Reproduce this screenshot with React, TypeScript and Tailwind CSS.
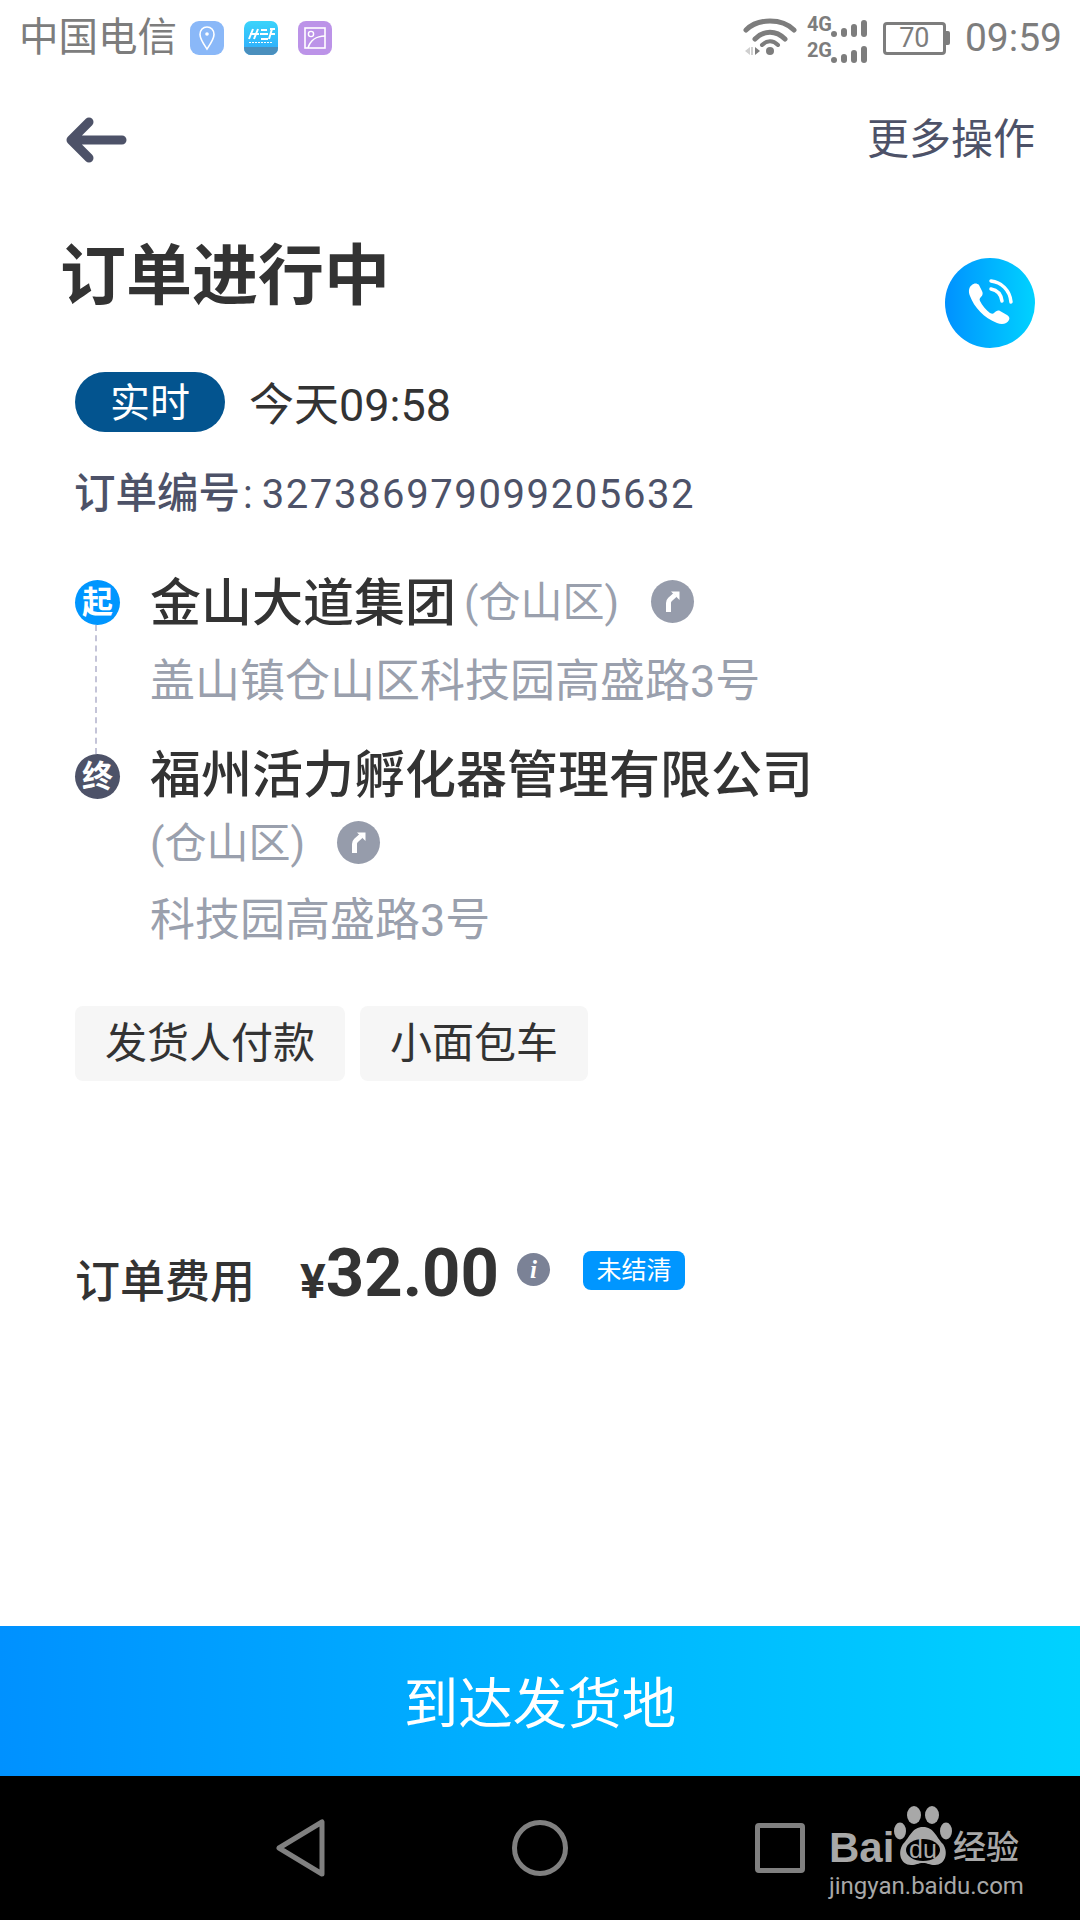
import React from 'react';

const font = { fontFamily: '"Roboto", "Noto Sans CJK SC", sans-serif' };

const TurnIcon = () => (
  <span className="w-[43px] h-[43px] rounded-full bg-[#969cab] flex items-center justify-center shrink-0">
    <svg width="14" height="21" viewBox="0 0 14 21" fill="none">
      <path d="M2.5 21V12C2.5 10.5 3 9.5 4 8.5L9 4" stroke="#fff" strokeWidth="5" />
      <path d="M5 0.5H13.5V9Z" fill="#fff" />
    </svg>
  </span>
);

const StatusBar = () => (
  <div className="h-[76px] flex items-center pl-[19px] pr-[18px] text-[#7d7d7d]">
    <span className="text-[39.5px] leading-none">中国电信</span>
    <div className="ml-[13px] flex gap-[20px]">
      <span className="w-[34px] h-[34px] rounded-[9px] bg-[#8ab8f8] flex items-center justify-center">
        <svg width="18" height="26" viewBox="0 0 18 26" fill="none">
          <path d="M9 24C5 18 2 14 2 9.5C2 5 5 2 9 2s7 3 7 7.5C16 14 13 18 9 24Z" stroke="#fff" strokeWidth="1.6" />
          <circle cx="9" cy="9" r="1.8" fill="#fff" />
        </svg>
      </span>
      <span className="w-[34px] h-[34px] rounded-[7px] overflow-hidden bg-gradient-to-b from-[#3bd4fb] to-[#2fa8fb] flex flex-col items-center justify-between">
        <svg width="30" height="19" viewBox="0 0 30 19" className="mt-[6px]" fill="none">
          <path d="M3 12L7 2M8 12L12 2M4 7H13M15 3H21M14 7H22M15 12H22M24 2H29M24 7H29M23 12L26 2" stroke="#fff" strokeWidth="2" />
          <path d="M3 15.5H27" stroke="#fff" strokeWidth="1" strokeDasharray="2 1" />
        </svg>
        <span className="w-full h-[8px] bg-[#4a8fbd]" />
      </span>
      <span className="w-[34px] h-[34px] rounded-[8px] bg-[#bc93e8] flex items-center justify-center">
        <svg width="24" height="24" viewBox="0 0 24 24" fill="none">
          <rect x="2" y="2" width="20" height="20" stroke="#fff" strokeWidth="1.6" />
          <circle cx="8" cy="8" r="2.6" stroke="#fff" strokeWidth="1.4" />
          <path d="M5 22C7 15 13 10 22 10" stroke="#fff" strokeWidth="1.6" />
        </svg>
      </span>
    </div>
    <div className="ml-auto flex items-center">
      <svg width="54" height="42" viewBox="0 0 54 42" fill="none" className="-mt-[3px]">
        <path d="M3 14C15 2 39 2 51 14" stroke="#7d7d7d" strokeWidth="5" strokeLinecap="round" />
        <path d="M12 23C21 14 33 14 42 23" stroke="#7d7d7d" strokeWidth="5" strokeLinecap="round" />
        <path d="M19 29C24 24 30 24 35 29" stroke="#7d7d7d" strokeWidth="4" strokeLinecap="round" />
        <circle cx="27" cy="35" r="4" fill="#7d7d7d" />
        <path d="M2 35L7 31V39Z" fill="#cfcfcf" />
        <path d="M9 31V39" stroke="#cfcfcf" strokeWidth="2" />
        <path d="M12 31L17 35L12 39Z" fill="#7d7d7d" />
      </svg>
      <div className="ml-[10px] flex flex-col gap-[3px]">
        {['4G', '2G'].map((label) => (
          <div key={label} className="flex items-end h-[23px]">
            <span className="text-[20px] leading-none font-bold self-start w-[24px]">{label}</span>
            <div className="flex items-end gap-[4px]">
              <span className="w-[6px] h-[6px] rounded-full bg-[#7d7d7d]" />
              <span className="w-[6px] h-[9px] rounded-full bg-[#7d7d7d]" />
              <span className="w-[6px] h-[13px] rounded-full bg-[#7d7d7d]" />
              <span className="w-[6px] h-[17px] rounded-full bg-[#7d7d7d]" />
            </div>
          </div>
        ))}
      </div>
      <div className="ml-[16px] flex items-center">
        <span className="w-[63px] h-[33px] border-[3px] border-[#7d7d7d] rounded-[4px] flex items-center justify-center text-[27px] leading-none">70</span>
        <span className="w-[4px] h-[14px] bg-[#7d7d7d] rounded-r-[2px]" />
      </div>
      <span className="ml-[15px] text-[39px] leading-none">09:59</span>
    </div>
  </div>
);

const Tag = ({ children }: { children: React.ReactNode }) => (
  <span className="h-[75px] px-[30px] rounded-[8px] bg-[#f6f6f6] flex items-center text-[42px] text-[#333] leading-none">
    {children}
  </span>
);

const NavBar = () => (
  <div className="h-[144px] bg-black relative flex items-center">
    <div className="ml-[276px] flex items-center">
      <svg width="50" height="58" viewBox="0 0 50 58" fill="none">
        <path d="M3 29L46 3V55Z" stroke="#808080" strokeWidth="5" strokeLinejoin="round" />
      </svg>
      <svg width="56" height="56" viewBox="0 0 56 56" fill="none" className="ml-[186px]">
        <circle cx="28" cy="28" r="25.5" stroke="#808080" strokeWidth="5" />
      </svg>
      <span className="ml-[187px] w-[50px] h-[50px] border-[5px] border-[#808080] rounded-[4px]" />
    </div>
    <div className="absolute left-[829px] top-[30px] w-[192px] text-[#a8a8a8]">
      <div className="flex items-end h-[60px]">
        <span className="text-[42px] leading-[36px] font-bold w-[65px]" style={{ fontFamily: '"Liberation Sans", sans-serif' }}>Bai</span>
        <svg width="58" height="60" viewBox="0 0 58 60" fill="#a8a8a8">
          <ellipse cx="20" cy="9" rx="7" ry="9" />
          <ellipse cx="38" cy="9" rx="7" ry="9" />
          <ellipse cx="6" cy="25" rx="6" ry="8.5" />
          <ellipse cx="52" cy="25" rx="6" ry="8.5" />
          <path d="M29 21C40 21 42 31 49 38C55 47 51 59 41 59C35 59 34 57 29 57C24 57 23 59 17 59C7 59 3 47 9 38C16 31 18 21 29 21Z" />
          <ellipse cx="29" cy="44" rx="17" ry="11" fill="#000" />
          <text x="29" y="52" textAnchor="middle" fontSize="25" fill="#a8a8a8" fontFamily="Liberation Sans">du</text>
        </svg>
        <span className="ml-[1px] text-[33px] leading-[36px] font-medium whitespace-nowrap">经验</span>
      </div>
      <div className="text-[24px] leading-none mt-[8px] whitespace-nowrap" style={{ fontFamily: '"Roboto", sans-serif' }}>jingyan.baidu.com</div>
    </div>
  </div>
);

export default function App() {
  return (
    <div className="w-[1080px] h-[1920px] bg-white flex flex-col overflow-hidden" style={font}>
      <StatusBar />

      <div className="flex items-center justify-between pl-[66px] pr-[45px] h-[128px]">
        <svg width="62" height="46" viewBox="0 0 62 46" fill="none">
          <path d="M23 5L5 23L23 41M6 23H56" stroke="#4d5268" strokeWidth="9" strokeLinecap="round" strokeLinejoin="round" />
        </svg>
        <span className="text-[42px] leading-none text-[#4d5268]">更多操作</span>
      </div>

      <div className="flex items-start justify-between pl-[60px] pr-[45px]">
        <h1 className="text-[66px] leading-none font-bold text-[#333] mt-[40px]">订单进行中</h1>
        <span className="mt-[54px] w-[90px] h-[90px] rounded-full bg-gradient-to-r from-[#0091ff] to-[#00d2ff] flex items-center justify-center">
          <svg width="48" height="50" viewBox="0 0 48 50" fill="none">
            <path d="M6 7C3 9 2 13 4 18C8 29 18 40 31 45C36 47 41 46 43 42C44 40 43 38 41 37L34 33C32 32 30 33 28 35C27 36 26 36 24 35C20 32 16 27 14 23C13 21 14 20 15 19C17 17 17 15 16 13L13 7C11 5 8 5 6 7Z" fill="#fff" />
            <path d="M25 11C31 12 35 16 36 23" stroke="#fff" strokeWidth="3.5" strokeLinecap="round" />
            <path d="M25 3C35 4 44 12 45 24" stroke="#fff" strokeWidth="3.5" strokeLinecap="round" />
          </svg>
        </span>
      </div>

      <div className="pl-[75px] pr-[45px] mt-[24px]">
        <div className="flex items-center">
          <span className="w-[150px] h-[60px] pt-[3px] rounded-full bg-[#03548f] text-white text-[40px] leading-none flex items-center justify-center">实时</span>
          <span className="ml-[24px] pt-[6px] text-[45px] leading-none text-[#333]">今天09:58</span>
        </div>
        <div className="mt-[38px] text-[40px] leading-[48px] text-[#4d5268] -ml-[1px]">
          <span className="text-[41.5px] font-medium">订单编号</span>
          <span className="ml-[3px]">:</span>
          <span className="ml-[9px] tracking-[1.6px]">327386979099205632</span>
        </div>

        <div className="mt-[56px] relative pl-[75px]">
          <span className="absolute left-[20px] top-[50px] h-[129px] border-l-2 border-dashed border-[#c4c4d8]" />
          <span className="absolute left-0 top-[5px] w-[45px] h-[45px] rounded-full bg-[#0096ff] text-white text-[31px] font-bold leading-none flex items-center justify-center">起</span>
          <span className="absolute left-0 top-[179px] w-[45px] h-[45px] rounded-full bg-[#4d5268] text-white text-[31px] font-bold leading-none flex items-center justify-center">终</span>

          <div className="flex items-center h-[56px]">
            <span className="text-[51px] leading-none font-medium text-[#333]">金山大道集团</span>
            <span className="ml-[8px] text-[42px] leading-none text-[#9aa0ad]">(仓山区)</span>
            <span className="ml-[32px] -mt-[4px]"><TurnIcon /></span>
          </div>
          <div className="mt-[23px] text-[45px] leading-[56px] text-[#9aa0ad]">盖山镇仓山区科技园高盛路3号</div>

          <div className="mt-[31px] text-[51px] leading-[70px] font-medium text-[#333]">福州活力孵化器管理有限公司</div>
          <div className="flex items-center h-[56px] mt-[5px]">
            <span className="text-[42px] leading-none text-[#9aa0ad]">(仓山区)</span>
            <span className="ml-[32px] -mt-[4px]"><TurnIcon /></span>
          </div>
          <div className="mt-[21px] text-[45px] leading-[56px] text-[#9aa0ad]">科技园高盛路3号</div>
        </div>

        <div className="mt-[57px] flex gap-[15px]">
          <Tag>发货人付款</Tag>
          <Tag>小面包车</Tag>
        </div>

        <div className="mt-[152px] flex items-center h-[80px]">
          <span className="text-[45px] leading-none font-medium text-[#333] mt-[18px]">订单费用</span>
          <span className="ml-[45px] text-[48px] leading-none font-bold text-[#333] mt-[18px]">¥</span>
          <span className="text-[67px] leading-none font-bold text-[#333]">32.00</span>
          <span className="ml-[18px] w-[33px] h-[33px] rounded-full bg-[#7b8296] text-white text-[25px] font-bold italic leading-none flex items-center justify-center -mt-[8px]" style={{ fontFamily: '"Liberation Serif", serif' }}>i</span>
          <span className="ml-[33px] w-[102px] h-[39px] rounded-[8px] bg-[#0096ff] text-white text-[25px] leading-none flex items-center justify-center -mt-[6px]">未结清</span>
        </div>
      </div>

      <div className="mt-auto h-[150px] bg-gradient-to-r from-[#0091ff] to-[#00d2ff] flex items-center justify-center pt-[6px] text-white text-[54.5px] leading-none">到达发货地</div>
      <NavBar />
    </div>
  );
}
